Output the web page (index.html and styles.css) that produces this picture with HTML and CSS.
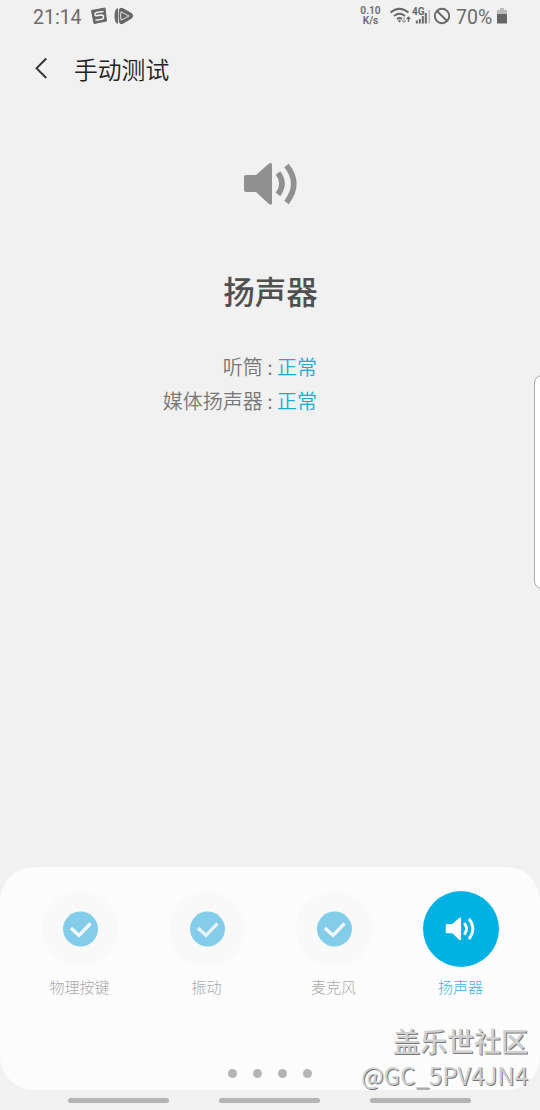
FILE: index.html
```html
<!DOCTYPE html>
<html lang="zh-CN">
<head>
<meta charset="utf-8">
<title>手动测试</title>
<link rel="stylesheet" href="styles.css">
</head>
<body>
<div class="screen">
  <header class="status">
    <span class="clock">21:14</span>
    <svg class="app-a" width="18" height="18" viewBox="0 0 18 18"><path d="M1.5 3.500 15 1 16.500 14 4 16.500Z" fill="#666" stroke="#666" stroke-linejoin="round"/><path d="M13.500 4.500 6.500 5.500Q4.800 6 5 7.500T7 8.600L11.500 8Q13.500 8 13.500 10T12 12.200L5.500 13.200" fill="none" stroke="#f1f1f1" stroke-width="1.600"/></svg>
    <svg class="app-b" width="20" height="18" viewBox="0 0 20 18"><path d="M3.500 1.500Q1 3 1 9T3.500 16.500V1.500Z" fill="#666" stroke="#666"/><path d="M5.500 2.200Q6.500 .500 9 1.700L17.500 6.500Q20 8.700 17.500 11.200L9 16.200Q6.500 17.500 5.500 15.500Q4.600 9 5.500 2.200Z" fill="#666" stroke="#666"/><path d="M7 4.800Q6.200 9 7 13.200L15 9Z" fill="none" stroke="#e6e6e6" stroke-width="1" stroke-linejoin="round"/></svg>
    <span class="speed"><span>0.10</span><span>K/s</span></span>
    <svg class="signals" width="62" height="20" viewBox="0 0 62 20" fill="none" stroke="#686868"><path d="M.5 6.500Q9.500-1 18.500 6.500M4 10Q9.500 5.500 15 10M7 13Q9.500 11 12 13" stroke-width="1.700"/><circle cx="9.500" cy="15" r=".8" fill="#686868"/><path d="M14 11V16.500M12 14.500 14 16.500 16 14.500" stroke="#aaa" stroke-width="1.200"/><path d="M18.500 16V11M16.700 13 18.500 11.200 20.300 13" stroke-width="1.300"/><path d="M26.800 17.500V14.500M29.800 17.500V13M32.800 17.500V10M35.800 17.500V7" stroke-width="2"/><path d="M39.300 17.500V4" stroke="#bbb" stroke-width="1.500"/><circle cx="52" cy="10" r="7.200" stroke-width="1.900"/><path d="M47 5 57 15" stroke-width="1.900"/><text x="22" y="9" class="network">4G</text></svg>
    <span class="percent">70%</span>
    <svg class="battery" width="12" height="18" viewBox="0 0 12 18"><path d="M4 1H8V3H11V8H1V3H4Z" fill="#bcbcbc"/><path d="M1 7H11V16.500H1Z" fill="#666"/></svg>
  </header>
  <div class="titlebar">
    <svg width="16" height="24" viewBox="0 0 16 24"><path d="M14.300 1.500 4.500 11.300 14.300 21" fill="none" stroke="#333" stroke-width="1.900"/></svg>
    <h1>手动测试</h1>
  </div>
  <main class="result">
    <svg class="speaker" width="56" height="44" viewBox="0 0 56 44"><path d="M3 13H13L26 1.500Q29 0 29 3V41Q29 44 26 42L13 30H3Q1 30 1 28V15Q1 13 3 13Z" fill="#909090"/><path d="M35 11Q43 21.500 35 32.500M43.500 3.500Q58 21.500 43.500 40.500" fill="none" stroke="#909090" stroke-width="5.600"/></svg>
    <h2>扬声器</h2>
    <p>听筒 : <b>正常</b></p>
    <p>媒体扬声器 : <b>正常</b></p>
  </main>
  <section class="panel">
    <div class="tests">
      <div class="test"><div class="disc"><svg width="36" height="36" viewBox="0 0 36 36"><circle cx="18.500" cy="18" r="17.500" fill="#84cdea"/><path d="M9 17 17 24.500 28.500 12.500" fill="none" stroke="#f4fafc" stroke-width="3.300"/></svg></div><span>物理按键</span></div>
      <div class="test"><div class="disc"><svg width="36" height="36" viewBox="0 0 36 36"><circle cx="18.500" cy="18" r="17.500" fill="#84cdea"/><path d="M9 17 17 24.500 28.500 12.500" fill="none" stroke="#e7f2f7" stroke-width="3.300"/></svg></div><span>振动</span></div>
      <div class="test"><div class="disc"><svg width="36" height="36" viewBox="0 0 36 36"><circle cx="18.500" cy="18" r="17.500" fill="#84cdea"/><path d="M9 17 17 24.500 28.500 12.500" fill="none" stroke="#f1f8fb" stroke-width="3.300"/></svg></div><span>麦克风</span></div>
      <div class="test active"><div class="disc"><svg width="31" height="24" viewBox="0 0 56 44"><path d="M3 13H13L26 1.500Q29 0 29 3V41Q29 44 26 42L13 30H3Q1 30 1 28V15Q1 13 3 13Z" fill="#fff"/><path d="M35 11Q43 21.500 35 32.500M43.500 3.500Q58 21.500 43.500 40.500" fill="none" stroke="#fff" stroke-width="5.200"/></svg></div><span>扬声器</span></div>
    </div>
    <div class="dots"><i></i><i></i><i></i><i></i></div>
  </section>
  <nav class="gestures"><i></i><i></i><i></i></nav>
  <div class="edge"></div>
  <div class="watermark"><div class="community">盖乐世社区</div><div class="user">@GC_5PV4JN4</div></div>
</div>
</body>
</html>
```
FILE: styles.css
```css
* { box-sizing: border-box; }
body { margin: 0; font-family: Roboto, "Noto Sans CJK SC", sans-serif; }
.screen { position: relative; width: 540px; height: 1110px; overflow: hidden; background: #f1f1f1; display: flex; flex-direction: column; }
.status { height: 34px; flex: none; display: flex; align-items: center; padding: 0 32px 2px 33px; color: #6b6b6b; }
.clock { font-size: 19.5px; width: 57px; line-height: 30px; padding-top: 3px; }
.app-b { margin-left: 6px; }
.speed { margin-left: auto; width: 23px; display: flex; flex-direction: column; align-items: center; font-size: 10.2px; line-height: 10px; font-weight: 600; }
.signals { margin-left: 8px; margin-right: 4px; flex: none; }
.network { font: 700 10px Roboto, sans-serif; fill: #686868; stroke: none; }
.percent { font-size: 19.5px; width: 40px; padding-top: 2px; }
.battery { flex: none; }
.titlebar { height: 70px; flex: none; display: flex; align-items: center; padding-left: 32px; gap: 26px; }
h1 { margin: 0; padding-top: 3px; font-size: 23.8px; line-height: 34px; font-weight: 350; color: #222; }
.result { flex: 1; padding-top: 58px; display: flex; flex-direction: column; }
.speaker { margin-left: 243px; flex: none; }
h2 { margin: 66px 0 34px; padding-left: 1px; text-align: center; font-size: 31.5px; line-height: 44px; font-weight: 500; color: #505050; }
p { width: 317px; margin: 0; text-align: right; font-family: "Noto Sans CJK SC", sans-serif; font-size: 20px; line-height: 34px; font-weight: 350; color: #777; }
p b { font-weight: 350; color: #1baad4; }
.panel { height: 223px; flex: none; margin-bottom: 20px; padding: 24px 16px 0; background: #fcfcfc; border-radius: 34px; }
.tests { display: grid; grid-template-columns: repeat(4, 127px); height: 177px; }
.test { display: flex; flex-direction: column; align-items: center; font-size: 15px; line-height: 24px; font-weight: 300; color: #aaa; }
.disc { width: 76px; height: 76px; border-radius: 50%; display: flex; align-items: center; justify-content: center; background: #f9f9f9; margin-bottom: 9px; }
.active { color: #45b3da; }
.active .disc { background: #00b2e3; }
.dots { display: flex; justify-content: center; gap: 16px; }
.dots i { width: 9px; height: 9px; border-radius: 50%; background: #b4b4b4; margin-top: 1px; }
.gestures { position: absolute; left: 68px; top: 1098px; display: flex; gap: 50px; }
.gestures i { width: 101px; height: 5px; border-radius: 3px; background: #b4b4b4; }
.edge { position: absolute; left: 534px; top: 375px; width: 20px; height: 214px; border: 1px solid #aaa; border-radius: 8px; background: #fff; }
.watermark { position: absolute; right: 12px; top: 1023px; text-align: right; color: #d0d0d0; text-shadow: 1px 1px 0 #777; white-space: nowrap; font-family: "Noto Sans CJK SC", sans-serif; }
.community { font-size: 27px; line-height: 36px; font-weight: 500; }
.user { font-size: 24px; line-height: 32px; }
```
